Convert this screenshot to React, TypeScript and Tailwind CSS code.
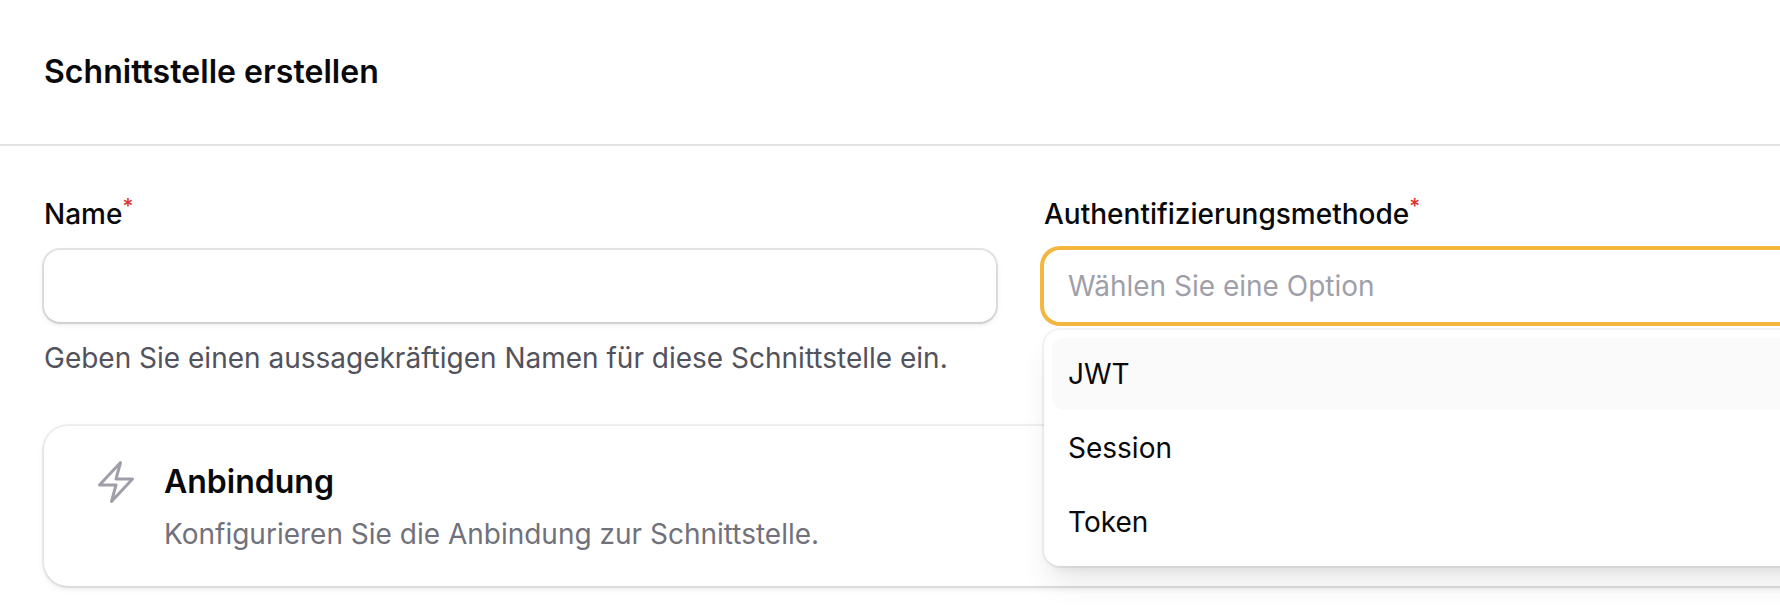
const options = ['JWT', 'Session', 'Token'];

const FieldLabel = ({ htmlFor, text }: { htmlFor: string; text: string }) => (
  <label htmlFor={htmlFor} className="h-10 text-[28px] leading-10 font-medium text-zinc-950">
    {text}
    <sup className="font-medium text-[#d8362f]">*</sup>
  </label>
);

const BoltIcon = () => (
  <svg
    viewBox="0 0 24 24"
    fill="none"
    stroke="currentColor"
    strokeWidth={1.5}
    strokeLinecap="round"
    strokeLinejoin="round"
    className="size-12 shrink-0 text-zinc-400"
  >
    <path d="m3.75 13.5 10.5-11.25L12 10.5h8.25L9.75 21.75 12 13.5H3.75Z" />
  </svg>
);

export default function App() {
  return (
    <div className="h-[612px] overflow-hidden bg-white font-['Inter',sans-serif] antialiased">
      <div className="w-[2040px]">
        <header className="border-b-2 border-[#e4e4e4] px-11 py-12">
          <h2 className="text-[32px] leading-[48px] font-semibold tracking-[0.04px] text-zinc-950">
            Schnittstelle erstellen
          </h2>
        </header>

        <form className="flex flex-col gap-12 px-11 pt-12">
          <div className="grid grid-cols-2 gap-12">
            <div className="flex flex-col gap-4">
              <FieldLabel htmlFor="name" text="Name" />
              <input
                id="name"
                type="text"
                className="h-[72px] rounded-2xl bg-white px-6 text-[28px] shadow-[0_0_0_2px_rgba(9,9,11,0.1),0_2px_6px_rgba(0,0,0,0.1),0_2px_4px_-2px_rgba(0,0,0,0.1)] outline-none"
              />
              <p className="text-[28px] leading-10 text-zinc-600">
                Geben Sie einen aussagekräftigen Namen für diese Schnittstelle ein.
              </p>
            </div>

            <div className="flex flex-col gap-4">
              <FieldLabel htmlFor="auth" text="Authentifizierungsmethode" />
              <div className="relative">
                <button
                  id="auth"
                  type="button"
                  className="block h-[72px] w-full rounded-2xl bg-white px-6 text-left text-[28px] text-zinc-400 ring-4 ring-[#f4b63f]"
                >
                  Wählen Sie eine Option
                </button>
                <ul className="absolute top-20 left-0 z-10 flex w-full flex-col gap-0.5 rounded-2xl bg-white p-2 shadow-[0_0_0_2px_rgba(9,9,11,0.05),0_20px_30px_-6px_rgba(0,0,0,0.1),0_8px_12px_-8px_rgba(0,0,0,0.1)]">
                  {options.map((option, i) => (
                    <li
                      key={option}
                      className={`rounded-xl px-4 py-4 text-[28px] leading-10 text-zinc-950 ${i === 0 ? 'bg-zinc-50' : ''}`}
                    >
                      {option}
                    </li>
                  ))}
                </ul>
              </div>
            </div>
          </div>

          <section className="flex gap-6 rounded-3xl bg-white px-12 py-8 shadow-[0_0_0_2px_rgba(9,9,11,0.05),0_2px_6px_rgba(0,0,0,0.1),0_2px_4px_-2px_rgba(0,0,0,0.1)]">
            <BoltIcon />
            <div className="flex flex-col gap-2">
              <h3 className="text-[32px] leading-[48px] font-semibold text-zinc-950">Anbindung</h3>
              <p className="text-[28px] leading-10 text-zinc-500">Konfigurieren Sie die Anbindung zur Schnittstelle.</p>
            </div>
          </section>
        </form>
      </div>
    </div>
  );
}
